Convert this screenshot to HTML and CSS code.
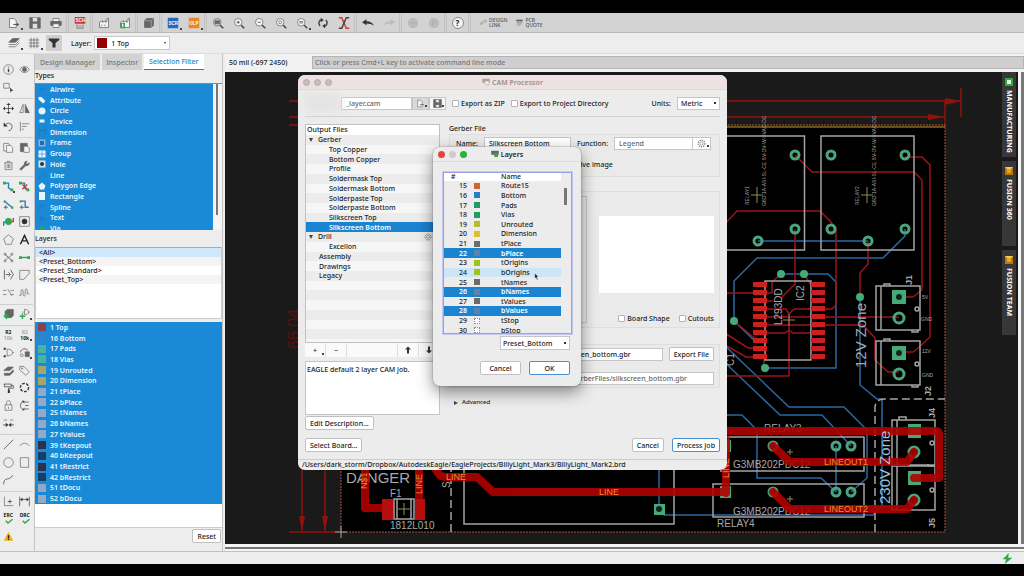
FILE: index.html
```html
<!DOCTYPE html>
<html lang="en">
<head>
<meta charset="utf-8">
<title>CAM Processor</title>
<link rel="stylesheet" href="styles.css">
</head>
<body>
<div class="screen">
  <header class="mainbar">
    <button class="tool menu" aria-label="Open"><svg viewBox="0 0 16 16"><path class="paper" d="M2 2h6l3 3v9H2z"/><path class="darkline" d="M7 10h7M12 8l2 2-2 2"/></svg></button>
    <button class="tool" aria-label="Save"><svg viewBox="0 0 16 16"><path class="solid" d="M1 1h14v14H1z"/><path class="pale" d="M5 1h6v5H5zM5 9h6v6H5z"/></svg></button>
    <button class="tool" aria-label="Print"><svg viewBox="0 0 16 16"><path class="paper" d="M4 2h8v4H4z"/><path class="solid" d="M1 6h14v5H1z"/><path class="paper" d="M4 9h8v5H4z"/></svg></button>
    <i class="sep"></i>
    <button class="tool" aria-label="Schematic"><svg viewBox="0 0 16 16"><path class="red" d="M1 0h14v9H1z"/><text x="2" y="7">SCH</text><path d="M4 10v5h8v-5M6 12h4"/></svg></button>
    <i class="sep"></i>
    <button class="tool" aria-label="Manufacturing"><svg viewBox="0 0 16 16"><path class="paper" d="M2 14V7l4-2v2l4-2v2l2-1V2h2v12zM4 11h2M8 11h2"/></svg></button>
    <button class="tool" aria-label="CAM"><svg viewBox="0 0 16 16"><path class="paper" d="M2 14V7l4-2v2l4-2v2l2-1V2h2v12z"/><path class="green" d="M2 8h6v7H2z"/><path class="white" d="M4 9h2v4H4z"/></svg></button>
    <i class="sep"></i>
    <button class="tool" aria-label="3D"><svg viewBox="0 0 16 16"><path class="solid" d="M2 5l3-3h9v9l-3 3H2z"/><path class="lightline" d="M2 5h9v9M11 5l3-3"/></svg></button>
    <i class="sep"></i>
    <button class="tool menu" aria-label="Script"><svg viewBox="0 0 16 16"><path class="blue" d="M1 1h14v14H1z"/><text x="2" y="10">SCR</text></svg></button>
    <button class="tool menu" aria-label="ULP"><svg viewBox="0 0 16 16"><path class="orange" d="M1 1h14v14H1z"/><text x="2" y="10">ULP</text></svg></button>
    <i class="sep"></i>
    <button class="tool" aria-label="Zoom to fit"><svg viewBox="0 0 16 16"><circle cx="7" cy="7" r="5"/><path class="solid" d="M4 5h6v4H4z"/><path class="thick" d="M11 11L15 15"/></svg></button>
    <button class="tool" aria-label="Zoom in"><svg viewBox="0 0 16 16"><circle class="paper" cx="7" cy="7" r="5"/><path class="darkline" d="M5 7h4M7 5v4"/><path class="thick" d="M11 11L15 15"/></svg></button>
    <button class="tool" aria-label="Zoom out"><svg viewBox="0 0 16 16"><circle class="paper" cx="7" cy="7" r="5"/><path class="darkline" d="M5 7h4"/><path class="thick" d="M11 11L15 15"/></svg></button>
    <button class="tool" aria-label="Zoom select"><svg viewBox="0 0 16 16"><circle class="paper" cx="7" cy="7" r="5"/><circle cx="7" cy="7" r="2"/><path class="thick" d="M11 11L15 15"/></svg></button>
    <button class="tool menu" aria-label="Zoom area"><svg viewBox="0 0 16 16"><circle class="paper" cx="7" cy="7" r="5"/><path d="M5 6h4v2H5z"/><path class="thick" d="M11 11L15 15"/></svg></button>
    <button class="tool" aria-label="Refresh"><svg viewBox="0 0 16 16"><path class="thick" d="M4 12C1 8 3 4 6 4M12 4c3 4 1 8-2 8"/><path class="dark" d="M5 1l4 3-4 3zM11 9l-4 3 4 3z"/></svg></button>
    <button class="tool" aria-label="Cancel command"><svg viewBox="0 0 16 16"><path class="redline" d="M1 1h4l6 14h4"/><path class="thick" d="M15 1h-4L5 15H1"/></svg></button>
    <i class="sep"></i>
    <button class="tool" aria-label="Undo"><svg viewBox="0 0 16 16"><path class="dark" d="M0 7l6-4v2.500c5 0 8 2 10 6-3-2-6-3-10-3V11z"/></svg></button>
    <button class="tool" aria-label="Redo"><svg viewBox="0 0 16 16"><path class="faint" d="M16 7l-6-4v2.500c-5 0-8 2-10 6 3-2 6-3 10-3V11z"/></svg></button>
    <i class="sep"></i>
    <button class="tool" aria-label="Stop"><svg viewBox="0 0 16 16"><circle class="faint" cx="8" cy="8" r="7"/><path class="lightline" d="M5 8h6"/></svg></button>
    <button class="tool" aria-label="Go"><svg viewBox="0 0 16 16"><circle class="faint" cx="8" cy="8" r="7"/><path class="lightline" d="M6 5l4 3-4 3z"/></svg></button>
    <i class="sep"></i>
    <button class="tool help" aria-label="Help"><span>?</span></button>
    <i class="sep"></i>
    <button class="wide"><svg viewBox="0 0 16 16"><path d="M7 9L4 12c-2 2-4-1-2-3l3-3M8 6l3-3c2-2 5 1 3 3l-3 3M5 10l5-5"/></svg><span>DESIGN<br>LINK</span></button>
    <button class="wide"><svg viewBox="0 0 16 16"><path class="solid" d="M1 2h14v3H1z"/><path d="M2 8h12M2 11h12M2 14h8"/></svg><span>PCB<br>QUOTE</span></button>
  </header>

  <div class="layerbar">
    <button class="tool menu" aria-label="Layer settings"><svg viewBox="0 0 16 16"><path class="solid" d="M1 7l5-5h9l-5 5z"/><path d="M1 10h9l5-5M1 13h9l5-5"/></svg></button>
    <button class="tool menu" aria-label="Grid"><svg viewBox="0 0 16 16"><path d="M4 1v14M8 1v14M12 1v14M1 4h14M1 8h14M1 12h14"/></svg></button>
    <button class="tool pressed" aria-label="Filter"><svg viewBox="0 0 16 16"><path class="dark" d="M1 2h14v2l-5 4v6H6V8L1 4z"/></svg></button>
    <label class="layer-label" for="layer">Layer:</label>
    <div class="layer-pick"><i class="swatch c-top"></i><select id="layer"><option>1 Top</option></select></div>
  </div>

  <main class="work">
    <nav class="palette" aria-label="Tools">
      <button aria-label="Info"><svg viewBox="0 0 16 16"><circle cx="8" cy="8" r="7"/><path class="thick" d="M8 7v5M8 4v1"/></svg></button>
      <button aria-label="Show"><svg viewBox="0 0 16 16"><path d="M1 8c4-6 10-6 14 0-4 6-10 6-14 0z"/><circle class="solid" cx="8" cy="8" r="3"/></svg></button>
      <button aria-label="Select"><svg viewBox="0 0 16 16"><path d="M1 2h8v7H1z"/><path class="dark" d="M10 8l5 5h-3l-1 3z"/></svg></button>
      <span></span>
      <hr>
      <button aria-label="Move"><svg viewBox="0 0 16 16"><path class="darkline" d="M8 2v12M2 8h12"/><path class="dark" d="M8 0l3 3H5zM8 16l3-3H5zM0 8l3-3v6zM16 8l-3-3v6z"/></svg></button>
      <button aria-label="Mirror"><svg viewBox="0 0 16 16"><path d="M6 2v12H1z"/><path class="solid" d="M9 2v12h6z"/></svg></button>
      <button aria-label="Rotate"><svg viewBox="0 0 16 16"><path class="darkline" d="M4 5c5-5 12 1 8 7-1 1-2 2-4 2"/><path class="dark" d="M1 2v6h6z"/></svg></button>
      <button aria-label="Align"><svg viewBox="0 0 16 16"><path d="M2 1v14M4 4h11M4 8h7M4 12h3"/></svg></button>
      <hr>
      <button aria-label="Copy"><svg viewBox="0 0 16 16"><path class="paper" d="M1 2h7l2 3v8H1z"/><path class="paper" d="M5 5h6l3 3v7H5z"/></svg></button>
      <button aria-label="Paste"><svg viewBox="0 0 16 16"><path class="solid" d="M2 2h10v12H2z"/><path class="paper" d="M7 6h5l3 3v6H7z"/></svg></button>
      <button aria-label="Delete"><svg viewBox="0 0 16 16"><path d="M2 4h12M6 4V2h4v2M3 4v10h10V4M6 6v6M8 6v6M10 6v6"/></svg></button>
      <button aria-label="Change"><svg viewBox="0 0 16 16"><path class="solid" d="M1 13l7-7c-1-3 2-5 4-4l-2 2 2 2 3-2c0 4-3 5-5 4l-7 7z"/></svg></button>
      <hr>
      <button class="menu" aria-label="Route"><svg viewBox="0 0 16 16"><path class="blueline" d="M2 3h6v7l4 3"/><path class="green" d="M0 1h4v4H0zM11 11h4v4h-4z"/></svg></button>
      <button aria-label="Ripup"><svg viewBox="0 0 16 16"><path class="blueline" d="M2 3h6v7l4 3"/><path class="redline" d="M5 5l7 7M12 5l-7 7"/><path class="green" d="M0 1h4v4H0zM11 11h4v4h-4z"/></svg></button>
      <button aria-label="Split"><svg viewBox="0 0 16 16"><path class="blueline" d="M2 3l12 10"/><path class="darkline" d="M1 12h6M4 9v6"/><path class="green" d="M1 2h3v3H1zM12 11h3v3h-3z"/></svg></button>
      <button aria-label="Slice"><svg viewBox="0 0 16 16"><path class="blueline" d="M3 3h6v9h5"/><path class="green" d="M1 2h3v3H1z"/><path class="darkline" d="M1 12h6M4 9v6"/></svg></button>
      <button aria-label="Via"><svg viewBox="0 0 16 16"><path class="blueline" d="M1 14V9h7"/><path class="redline" d="M8 8h7V3"/><circle class="green" cx="8" cy="8" r="5"/></svg></button>
      <button aria-label="Pad"><svg viewBox="0 0 16 16"><path d="M1 1h14v14H1z"/><circle class="dark" cx="8" cy="8" r="4"/></svg></button>
      <button aria-label="Polygon"><svg viewBox="0 0 16 16"><path d="M8 1l7 6-3 8H4L1 7z"/></svg></button>
      <button aria-label="Text"><svg viewBox="0 0 16 16"><path class="bold" d="M2 15L8 2l6 13M5 10h6"/></svg></button>
      <button aria-label="Ratsnest"><svg viewBox="0 0 16 16"><path d="M3 3c3 6 7 6 10 0M3 13c3-6 7-6 10 0M3 3l10 10"/><circle cx="3" cy="3" r="1.500"/><circle cx="13" cy="3" r="1.500"/><circle cx="3" cy="13" r="1.500"/><circle cx="13" cy="13" r="1.500"/></svg></button>
      <button aria-label="Airwire"><svg viewBox="0 0 16 16"><path class="greenline" d="M2 8h12"/><path class="green" d="M0 6h4v4H0zM12 6h4v4h-4z"/></svg></button>
      <button aria-label="Optimize"><svg viewBox="0 0 16 16"><path class="darkline" d="M2 1v14M4 8h6M8 5l3 3-3 3M11 1l4 7-4 7"/></svg></button>
      <button aria-label="Miter"><svg viewBox="0 0 16 16"><path d="M1 15V2h14v4L7 15z"/></svg></button>
      <button aria-label="Fanout"><svg viewBox="0 0 16 16"><path d="M0 5h5M0 11h5M7 3l6 10M11 5h5M11 11h5"/></svg></button>
      <button aria-label="Meander"><svg viewBox="0 0 16 16"><path d="M0 12h3V6c0-3 3-3 3 0v5c0 3 3 3 3 0V5c0-3 3-3 3 0v5h3"/></svg></button>
      <hr>
      <button aria-label="Add"><svg viewBox="0 0 16 16"><path class="solid" d="M3 5l3-3h9v9l-3 3H3z"/><path class="greenline" d="M1 12h8M5 8v8"/></svg></button>
      <button class="menu" aria-label="Add part"><svg viewBox="0 0 16 16"><path d="M5 6h3V2c4 0 6 2 6 4s-2 4-6 4V6M14 6h2"/><path class="greenline" d="M1 12h8M5 8v8"/></svg></button>
      <hr>
      <button class="words" aria-label="Name">R2<br><small>10k</small></button>
      <button class="words menu" aria-label="Value"><small>R2</small><br>10k</button>
      <button aria-label="Pinswap"><svg viewBox="0 0 16 16"><path d="M6 8V3c5 0 8 2 8 5s-3 5-8 5zM14 8h2"/><path class="dark" d="M1 1h3v3H1zM1 12h3v3H1z"/></svg></button>
      <button class="menu" aria-label="Replace"><svg viewBox="0 0 16 16"><path class="darkline" d="M2 8c1-6 8-7 11-3"/><path class="solid" d="M9 7h6v7H9z"/><circle cx="4" cy="12" r="2"/></svg></button>
      <button aria-label="Smash"><svg viewBox="0 0 16 16"><path class="solid" d="M1 8l6-5h8l-5 5zM2 12h8l5-5v3l-5 5H2z"/></svg></button>
      <button aria-label="Attribute"><svg viewBox="0 0 16 16"><path d="M1 7V2h6l8 8-5 5z"/><circle cx="4.500" cy="5" r="1"/></svg></button>
      <button aria-label="Paint"><svg viewBox="0 0 16 16"><path class="darkline" d="M1 3h11v4H2V3M12 5h3v4H8v3"/><path class="dark" d="M7 11h3v5H7z"/></svg></button>
      <button aria-label="Group"><svg viewBox="0 0 16 16"><circle class="dashed" cx="8" cy="8" r="6"/></svg></button>
      <button aria-label="Lock"><svg viewBox="0 0 16 16"><path d="M3 7h10v8H3zM5 7V4c0-4 6-4 6 0v3M8 10v3"/></svg></button>
      <button aria-label="Order"><svg viewBox="0 0 16 16"><path class="darkline" d="M6 3C1 3 1 12 5 13M9 3h5M9 8h5M9 13h5"/><path class="dark" d="M4 1h4v4zM4 15h4v-4z"/></svg></button>
      <button aria-label="Join"><svg viewBox="0 0 16 16"><path d="M1 3h5M10 3h5"/><path class="darkline" d="M0 10h6M10 10h6"/><path class="dark" d="M4 7l4 3-4 3zM12 7l-4 3 4 3z"/></svg></button>
      <span></span>
      <hr>
      <button aria-label="Line"><svg viewBox="0 0 16 16"><path class="darkline" d="M1 15L15 1"/></svg></button>
      <button aria-label="Arc"><svg viewBox="0 0 16 16"><path d="M1 10c4-5 10-5 14 0"/></svg></button>
      <button aria-label="Circle"><svg viewBox="0 0 16 16"><circle cx="8" cy="8" r="7"/></svg></button>
      <button aria-label="Rectangle"><svg viewBox="0 0 16 16"><path d="M2 1h12v14H2z"/></svg></button>
      <button aria-label="Spline"><svg viewBox="0 0 16 16"><path class="darkline" d="M1 15c0-12 8-4 13-13"/></svg></button>
      <span></span>
      <hr>
      <button aria-label="Mark"><svg viewBox="0 0 16 16"><path d="M2 1v13h13"/><path class="darkline" d="M7 8h6M10 5v6"/></svg></button>
      <button aria-label="Dimension"><svg viewBox="0 0 16 16"><path class="darkline" d="M1 1v14M15 1v14M2 5h12"/><path class="dark" d="M2 5l3-3v6zM14 5l-3-3v6z"/></svg></button>
      <button class="words" aria-label="ERC">ERC<svg viewBox="0 0 16 8"><path class="greenline" d="M5 3l3 3 6-5"/></svg></button>
      <button class="words" aria-label="DRC">DRC<svg viewBox="0 0 16 8"><path class="greenline" d="M5 3l3 3 6-5"/></svg></button>
      <button aria-label="Errors"><svg viewBox="0 0 16 16"><path class="amber" d="M8 1l7 13H1z"/><path class="bold" d="M8 6v4M8 11v2"/></svg></button>
      <span></span>
    </nav>

    <section class="side">
      <div class="tabs" role="tablist">
        <button role="tab">Design Manager</button><button role="tab">Inspector</button><button role="tab" class="on" aria-selected="true">Selection Filter</button>
      </div>
      <h2>Types</h2>
      <div class="types">
        <ul class="bluelist">
          <li><svg viewBox="0 0 16 16"><path class="dim" d="M1 8h14"/></svg>Airwire</li>
          <li><svg viewBox="0 0 16 16"><path class="white" d="M1 7V2h6l8 8-5 5z"/></svg>Attribute</li>
          <li><svg viewBox="0 0 16 16"><circle class="white" cx="8" cy="8" r="7"/></svg>Circle</li>
          <li><svg viewBox="0 0 16 16"><path class="white" d="M3 5h10v6H3z"/></svg>Device</li>
          <li><svg viewBox="0 0 16 16"><path class="dim" d="M2 1v14M14 1v14M2 5h12"/></svg>Dimension</li>
          <li><svg viewBox="0 0 16 16"><path class="haze" d="M1 1h14v14H1z"/><path class="blue" d="M4 4h8v8H4z"/></svg>Frame</li>
          <li><svg viewBox="0 0 16 16"><path class="white" d="M1 1h14v14H1z"/><path class="dim" d="M8 2v12M2 8h12"/></svg>Group</li>
          <li><svg viewBox="0 0 16 16"><path class="pale" d="M1 1h14v14H1z"/><circle class="dark" cx="8" cy="8" r="4"/></svg>Hole</li>
          <li><svg viewBox="0 0 16 16"><path class="dim" d="M2 14L14 2"/></svg>Line</li>
          <li><svg viewBox="0 0 16 16"><path class="white" d="M8 1l7 6-3 8H4L1 7z"/></svg>Polygon Edge</li>
          <li><svg viewBox="0 0 16 16"><path class="white" d="M2 0h12v16H2z"/></svg>Rectangle</li>
          <li><svg viewBox="0 0 16 16"><path class="dim" d="M1 14c0-11 8-4 13-12"/></svg>Spline</li>
          <li><svg viewBox="0 0 16 16"><path class="dim" d="M3 14L8 2l5 12M5 10h6"/></svg>Text</li>
          <li><svg viewBox="0 0 16 16"><circle class="green" cx="8" cy="8" r="5"/></svg>Via</li>
        </ul>
        <i class="thumb"></i>
      </div>
      <h2>Layers</h2>
      <ul class="presets">
        <li class="on">&lt;All&gt;</li><li>&lt;Preset_Bottom&gt;</li><li>&lt;Preset_Standard&gt;</li><li>&lt;Preset_Top&gt;</li>
      </ul>
      <div class="layers">
        <ul class="bluelist">
          <li><i class="swatch k-top"></i>1 Top</li>
          <li><i class="swatch k-bottom"></i>16 Bottom</li>
          <li><i class="swatch k-pad"></i>17 Pads</li>
          <li><i class="swatch k-pad"></i>18 Vias</li>
          <li><i class="swatch k-gold"></i>19 Unrouted</li>
          <li><i class="swatch k-gold"></i>20 Dimension</li>
          <li><i class="swatch k-gray"></i>21 tPlace</li>
          <li><i class="swatch k-gray"></i>22 bPlace</li>
          <li><i class="swatch k-gray"></i>25 tNames</li>
          <li><i class="swatch k-gray"></i>26 bNames</li>
          <li><i class="swatch k-gray"></i>27 tValues</li>
          <li><i class="swatch k-tkeep"></i>39 tKeepout</li>
          <li><i class="swatch k-bkeep"></i>40 bKeepout</li>
          <li><i class="swatch k-tkeep"></i>41 tRestrict</li>
          <li><i class="swatch k-bkeep"></i>42 bRestrict</li>
          <li><i class="swatch k-gray"></i>51 tDocu</li>
          <li><i class="swatch k-gray"></i>52 bDocu</li>
        </ul>
      </div>
      <footer><button class="btn">Reset</button></footer>
    </section>

    <section class="editor">
      <div class="cmdline">
        <span>50 mil (-697 2450)</span>
        <input type="text" aria-label="Command line" placeholder="Click or press Cmd+L key to activate command line mode">
      </div>
      <div class="stage">
        <svg class="board" viewBox="225 72 777 472" preserveAspectRatio="xMinYMin slice">
          <rect fill="#000" x="341" y="127" width="604" height="405"/>
          <g class="dimline">
            <path d="M289 101H961M289 117H945M961 88v29M945 101v26M289 125h60M302 125v407M325 125v407M289 532h52"/>
            <path class="arrow" d="M945 98l16 3-16 4zM928 114l17 3-17 3zM299 516h6l-3 16zM322 516h6l-3 16z"/>
          </g>
          <text class="dimtext" transform="translate(299 349) rotate(-90)">66.04</text>
          <path class="gold" d="M341 127H945"/>
          <path class="edge" d="M341 125H945V532H341z"/>
          <path class="silk thin" d="M335 532h12M341 526v12"/>

          <g class="bluetrace">
            <path d="M758 241H868M905 229v7L883 258H757L734 281v40L755 341M781 274h47l8 8v86h-70M860 297v88l17 14h5v106l-9 10H664l-5-6V460"/>
            <path d="M720 341L789 407h55l23 23v48l-16 14M720 358L780 415h42l29 31M720 415h22l15 15v48h64l15 14M836 446v46"/>
          </g>
          <g class="redtrace">
            <path d="M795 155l17 17h102l8 8v110l-9 7h-14M905 157h17l8 8v172l-13 12-4 3h-14"/>
            <path d="M720 229l17-18h83l11 11 5 8v75l-4 4h-24M795 229v55l-13 13M868 241v23l-8 9v24M781 274l-9 8v11h-52M804 274l7 11"/>
            <path d="M760 317h139M760 325h103l12 13v22l13 12h11M760 309h26l3 5v62H720M789 314l5-5h22M789 330l4 3h23M789 330l-4 3h-24M734 321l24 20M720 330l28 18h10M720 342l26 15h18v11M753 301h20"/>
          </g>

          <g class="silk">
            <path d="M720 136h84.500v114H720M821 136h93v114h-93zM765 281h46v79h-46zM876 286h44v44h-44zM881 286v44M876 341h44v44h-44zM881 341v44"/>
            <path d="M884 286v-2h6v2M912 330v2h6v-2M884 341v-2h6v2M912 385v2h6v-2M899 420v-3h7v3M928 464v2h6"/>
            <path d="M720 437h144v34H720M713 484h151v33H713zM892 420h43v45h-43zM897 420v45M892 466h43v44h-43zM897 466v44M464 460h210v64H464z"/>
            <circle cx="917" cy="309" r="2"/><circle cx="917" cy="364" r="2"/><circle cx="932" cy="443" r="2"/><circle cx="932" cy="490" r="2"/>
          </g>
          <path class="zone" d="M451 440v92M875 532V407q1-8 9-8h61"/>

          <g class="pins">
            <path d="M760 281v80" /><path d="M818 281v80"/>
          </g>
          <path class="cross" d="M783 320h12M789 314v12M757 187v16M751 195h12M867 187v16M861 195h12M404 503v12M398 509h12M787 452h6M790 449v6M787 499h6M790 496v6"/>

          <g class="silktext">
            <text class="t14" transform="translate(866 368) rotate(-90)">12V Zone</text>
            <text class="t10" transform="translate(782 325) rotate(-90)">L293DD</text>
            <text class="t10" transform="translate(804 301) rotate(-90)">IC2</text>
            <text class="t9" transform="translate(912 285) rotate(-90)">J1</text>
            <text class="t9" transform="translate(931 396) rotate(-90)">J2</text>
            <text class="t9" transform="translate(935 418) rotate(-90)">J4</text>
            <text class="t9" transform="translate(935 528) rotate(-90)">J5</text>
            <text class="t5" transform="translate(766 206) rotate(-90)">G6D-1A-ASI-SL-CE SV-DV-W-SVAC-DC</text>
            <text class="t5" transform="translate(876 206) rotate(-90)">G6D-1A-ASI-SL-CE SV-DV-W-SVAC-DC</text>
            <text class="t5" transform="translate(749 205) rotate(-90)">RELAY1</text>
            <text class="t5" transform="translate(859 205) rotate(-90)">RELAY2</text>
            <text class="t5" x="922" y="299">5V</text><text class="t5" x="921" y="321">GND</text>
            <text class="t5" x="922" y="353">12V</text><text class="t5" x="922" y="377">GND</text>
            <text class="t10" x="764" y="432">RELAY3</text>
            <text class="t10" x="717" y="527">RELAY4</text>
            <text class="t10" x="733" y="468">G3MB202PDC12</text>
            <text class="t10" x="733" y="515">G3MB202PDC12</text>
            <text class="t14" x="346" y="483">DANGER</text>
            <text class="t10" x="390" y="497">F1</text>
            <text class="t10" x="390" y="529">1812L010</text>
            <text class="t10" transform="translate(450 488) rotate(-90)">S</text>
            <text class="t10" transform="translate(734 366) rotate(-90)">C1</text>
          </g>

          <g class="pads">
            <circle cx="795" cy="155" r="4"/><circle cx="831" cy="155" r="4"/><circle cx="905" cy="155" r="4"/>
            <circle cx="795" cy="229" r="4"/><circle cx="831" cy="229" r="4"/><circle cx="905" cy="229" r="4"/>
            <circle cx="758" cy="241" r="4"/><circle cx="868" cy="241" r="4"/>
            <circle cx="899" cy="318" r="5"/><circle cx="899" cy="374" r="5"/>
            <circle cx="914" cy="452" r="5"/><circle cx="914" cy="500" r="5"/>
            <circle cx="773" cy="446" r="4"/><circle cx="836" cy="446" r="4"/><circle cx="851" cy="446" r="4"/>
            <circle cx="773" cy="492" r="4"/><circle cx="836" cy="492" r="4"/><circle cx="851" cy="492" r="4"/>
          </g>
          <path class="padfill" d="M892 290h14v14h-14zM892 346h14v14h-14zM908 424h13v14h-13zM908 471h13v14h-13zM654 504h11v11h-11zM722 440h9v12h-9zM720 486h11v12h-11z"/>
          <g class="vias"><circle cx="781" cy="274" r="4"/><circle cx="804" cy="274" r="4"/><circle cx="860" cy="297" r="4"/><circle cx="734" cy="321" r="4"/><circle cx="765" cy="368" r="4"/></g>
          <g class="holes"><circle cx="899" cy="297" r="3"/><circle cx="899" cy="353" r="3"/><circle cx="659" cy="509" r="3"/></g>

          <g class="power">
            <path d="M720 431h216q3 0 3 4v43h-25M773 446l17 16h117l7-10M773 492l17 17h117l7-9M726 440v53M430 460l8 13q2 4 8 4h31l16 15h233M365 460v48h20M419 460v50"/>
            <path class="fuse" d="M382 499h11v21h-11zM415 499h10v21h-10z"/>
          </g>
          <path class="silk" d="M394 499h20v20h-20zM397 499v20M411 499v20"/>
          <text class="zonetext" transform="translate(890 504) rotate(-90)">230V Zone</text>
          <g class="nettext">
            <text x="824" y="465">LINEOUT1</text><text x="824" y="512">LINEOUT2</text>
            <text x="446" y="480">LINE</text><text x="599" y="495">LINE</text>
            <text transform="translate(422 494) rotate(-90)">LINE</text>
            <text transform="translate(367 489) rotate(-90)">N$1</text>
            <text transform="translate(729 478) rotate(-90)">LINE</text>
          </g>
        </svg>

        <aside class="edge-tabs">
          <button><i class="logo fabgreen"></i>MANUFACTURING</button>
          <button><i class="logo"></i>FUSION 360</button>
          <button><i class="logo"></i>FUSION TEAM</button>
        </aside>
        <i class="vscroll"></i>

        <section class="window cam" aria-label="CAM Processor">
          <header class="titlebar muted">
            <span class="lights"><i></i><i></i><i></i></span>
            <h1><svg viewBox="0 0 16 16"><path class="solid" d="M1 2h14v7H1z"/><path class="paper" d="M5 6h9v8H7z"/></svg>CAM Processor</h1>
          </header>
          <div class="jobbar">
            <i class="smudge"></i>
            <div class="filebox"><input type="text" aria-label="Job file" value="_layer.cam"><button class="menu" aria-label="Load job"><svg viewBox="0 0 16 16"><path class="paper" d="M3 2h5l3 3v9H3z"/><path class="darkline" d="M7 10h7"/></svg></button><button class="menu" aria-label="Save job"><svg viewBox="0 0 16 16"><path class="solid" d="M1 1h14v14H1z"/><path class="paper" d="M5 1h6v5H5zM5 10h6v5H5z"/></svg></button></div>
            <label><input type="checkbox">Export as ZIP</label>
            <label><input type="checkbox">Export to Project Directory</label>
            <label class="units" for="units">Units:</label>
            <select id="units"><option>Metric</option></select>
          </div>
          <div class="cambody">
            <div class="outputs">
              <div class="treebox">
                <h3>Output Files</h3>
                <ul class="tree">
                  <li class="l0">Gerber</li><li class="l2">Top Copper</li><li class="l2">Bottom Copper</li><li class="l2">Profile</li><li class="l2">Soldermask Top</li><li class="l2">Soldermask Bottom</li><li class="l2">Solderpaste Top</li><li class="l2">Solderpaste Bottom</li><li class="l2">Silkscreen Top</li><li class="l2 on">Silkscreen Bottom</li>
                  <li class="l0">Drill<svg class="gear" viewBox="0 0 16 16"><circle cx="8" cy="8" r="3"/><circle class="teeth" cx="8" cy="8" r="6"/></svg></li><li class="l2">Excellon</li><li class="l1">Assembly</li><li class="l1">Drawings</li><li class="l1">Legacy</li>
                  <li></li><li></li><li></li><li></li><li></li><li></li>
                </ul>
              </div>
              <div class="treetools"><button class="menu">+</button><button>−</button><span></span><button aria-label="Move up"><svg viewBox="0 0 16 16"><path class="dark" d="M8 1l6 6h-4v8H6V7H2z"/></svg></button><button aria-label="Move down"><svg viewBox="0 0 16 16"><path class="dark" d="M8 15l6-6h-4V1H6v8H2z"/></svg></button></div>
              <textarea aria-label="Description" readonly>EAGLE default 2 layer CAM job.</textarea>
              <button class="btn">Edit Description...</button>
            </div>
            <div class="settings">
              <h3>Gerber File</h3>
              <div class="group g1">
                <div class="row"><label for="nm">Name:</label><input id="nm" type="text" value="Silkscreen Bottom"><label for="fn">Function:</label><div class="combo"><input id="fn" type="text" value="Legend"><button class="menu" aria-label="Function options"><svg viewBox="0 0 16 16"><circle cx="8" cy="8" r="3"/><circle class="teeth" cx="8" cy="8" r="6"/></svg></button></div></div>
                <label class="negative"><input type="checkbox">Negative image</label>
              </div>
              <div class="group g2">
                <div class="used"></div>
                <div class="previewcol"><div class="preview"></div>
                  <div class="checks"><label><input type="checkbox">Board Shape</label><label><input type="checkbox">Cutouts</label></div></div>
              </div>
              <div class="group g3">
                <div class="row"><input class="right" type="text" aria-label="File name" value="silkscreen_bottom.gbr"><button class="btn">Export File</button></div>
                <input class="path" type="text" aria-label="File path" value="GerberFiles/silkscreen_bottom.gbr">
              </div>
              <button class="advanced"><i></i>Advanced</button>
            </div>
          </div>
          <div class="actions"><button class="btn">Select Board...</button><span></span><button class="btn">Cancel</button><button class="btn default">Process Job</button></div>
          <footer>/Users/dark_storm/Dropbox/AutodeskEagle/EagleProjects/BillyLight_Mark3/BillyLight_Mark2.brd</footer>
        </section>

        <section class="window pick" aria-label="Layers">
          <header class="titlebar">
            <span class="lights live"><i></i><i></i><i></i></span>
            <h1><svg viewBox="0 0 16 16"><path class="solid" d="M1 2h14v7H1z"/><path class="green" d="M5 6h9v8H7z"/></svg>Layers</h1>
          </header>
          <div class="tablebox">
            <table>
              <thead><tr><th>#</th><th></th><th>Name</th></tr></thead>
              <tbody>
                <tr><td>15</td><td><i class="swatch l15"></i></td><td>Route15</td></tr>
                <tr><td>16</td><td><i class="swatch l16"></i></td><td>Bottom</td></tr>
                <tr><td>17</td><td><i class="swatch l17"></i></td><td>Pads</td></tr>
                <tr><td>18</td><td><i class="swatch l17"></i></td><td>Vias</td></tr>
                <tr><td>19</td><td><i class="swatch l19"></i></td><td>Unrouted</td></tr>
                <tr><td>20</td><td><i class="swatch l20"></i></td><td>Dimension</td></tr>
                <tr><td>21</td><td><i class="swatch l21"></i></td><td>tPlace</td></tr>
                <tr class="on"><td>22</td><td><i class="swatch l22"></i></td><td>bPlace</td></tr>
                <tr><td>23</td><td><i class="swatch l23"></i></td><td>tOrigins</td></tr>
                <tr class="hover"><td>24</td><td><i class="swatch l23"></i></td><td>bOrigins</td></tr>
                <tr><td>25</td><td><i class="swatch l21"></i></td><td>tNames</td></tr>
                <tr class="on"><td>26</td><td><i class="swatch l22"></i></td><td>bNames</td></tr>
                <tr><td>27</td><td><i class="swatch l21"></i></td><td>tValues</td></tr>
                <tr class="on"><td>28</td><td><i class="swatch l22"></i></td><td>bValues</td></tr>
                <tr><td>29</td><td><i class="swatch l29"></i></td><td>tStop</td></tr>
                <tr><td>30</td><td><i class="swatch l30"></i></td><td>bStop</td></tr>
              </tbody>
            </table>
            <i class="thumb"></i>
            <svg class="cursor" viewBox="0 0 10 14"><path d="M1 1v10l2-2 2 4 2-1-2-4h3z"/></svg>
          </div>
          <select aria-label="Preset"><option>Preset_Bottom</option></select>
          <div class="pickactions"><button class="btn">Cancel</button><button class="btn default">OK</button></div>
        </section>
      </div>
      <i class="hscroll"></i>
    </section>
  </main>
  <footer class="status"><svg viewBox="0 0 16 16"><path class="green" d="M10 0L1 9h5l-2 7 11-9H9z"/></svg></footer>
</div>
</body>
</html>
```
FILE: styles.css
```css
* { box-sizing: border-box; }
html, body { margin: 0; height: 100%; }
body { background: #000; color: #222; font: 500 7px/9px "Noto Sans", "Open Sans", sans-serif; }
button, input, select, textarea { font: inherit; color: inherit; margin: 0; padding: 0; border: 0; background: none; border-radius: 0; outline: 0; min-width: 0; }
select { appearance: none; }
h1, h2, h3, ul { margin: 0; padding: 0; font: inherit; list-style: none; }
svg { display: block; fill: none; stroke: #666; stroke-width: 1; }

/* icon parts */
.solid { fill: #666; }
.dark { fill: #333; stroke: none; }
.darkline { stroke: #333; }
.paper { fill: #f4f4f4; }
.pale { fill: #d8e0e8; stroke: none; }
.haze { fill: #86b4dc; stroke: none; }
.white { fill: #e8f4ff; stroke: none; }
.red { fill: #d3343a; stroke: none; }
.blue { fill: #2768b8; stroke: none; }
.orange { fill: #e8862b; stroke: none; }
.green { fill: #2fa84c; stroke: none; }
.amber { fill: #f2b01e; stroke: none; }
.faint { fill: #bcbcbc; stroke: none; }
.dim { stroke: #1768a8; }
.thick { stroke-width: 2; stroke: #444; }
.bold { stroke-width: 2; stroke: #222; }
.lightline { stroke: #aaa; }
.redline { stroke: #d8392f; stroke-width: 2; }
.blueline { stroke: #2d7cb8; stroke-width: 2; }
.greenline { stroke: #2fa84c; stroke-width: 2; }
.dashed { stroke: #333; stroke-width: 2; stroke-dasharray: 4 2; }
.teeth { stroke-width: 2; stroke-dasharray: 2 2; }

.screen { height: 100vh; padding: 13px 0 12px; display: flex; flex-direction: column; }

.mainbar, .layerbar { display: flex; align-items: center; flex: none; }
.mainbar { height: 20px; padding-left: 3px; background: #d3d3d3; border-bottom: 1px solid #b8b8b8; }
.tool { width: 21px; height: 18px; display: grid; place-items: center; position: relative; flex: none; }
.tool svg { width: 12px; height: 12px; }
.tool text { fill: #fff; stroke: none; font: 700 6px "Liberation Sans", sans-serif; }
.menu { position: relative; }
.menu::after { content: ""; position: absolute; right: 1px; bottom: 2px; width: 2px; height: 2px; background: #444; }
.sep { width: 3px; height: 20px; flex: none; border-left: 1px solid #c2c2c2; border-right: 1px solid #c2c2c2; }
.help span { width: 12px; height: 12px; border: 1px solid #888; border-radius: 50%; background: #f4f4f4; font-weight: 700; font-size: 8px; line-height: 10px; }
.wide { display: flex; align-items: center; gap: 2px; margin-left: 9px; font-size: 5px; line-height: 5px; text-align: left; color: #555; }
.wide svg { width: 7px; height: 7px; }

.layerbar { height: 21px; padding-left: 4px; background: #ededed; border-bottom: 1px solid #dcdcdc; }
.layerbar .tool { width: 20px; }
.layerbar .tool.pressed { background: #cfcfcf; width: 16px; height: 16px; margin-left: 2px; }
.layer-label { margin: 0 3px 0 9px; }
.layer-pick { display: flex; align-items: center; gap: 4px; width: 76px; height: 14px; padding: 0 2px; background: #fff; border: 1px solid #c8c8c8; position: relative; }
.layer-pick::after { content: ""; position: absolute; right: 3px; top: 5px; border: 1px solid transparent; border-top: 2px solid #333; border-bottom: 0; }
.layer-pick select { flex: 1; }
.swatch { display: block; width: 8px; height: 8px; flex: none; }
.layer-pick .swatch { width: 10px; height: 10px; }
.c-top { background: #980000; }

.work { flex: 1; min-height: 0; display: flex; background: #ededed; }

.palette { width: 35px; flex: none; display: grid; grid-template-columns: 1fr 1fr; align-content: space-between; justify-items: center; padding: 7px 1px 6px 0; border-right: 1px solid #c4c4c4; }
.palette button { width: 16px; height: 17px; display: grid; place-items: center; }
.palette svg { width: 11px; height: 11px; }
.palette span { height: 17px; }
.palette hr { grid-column: 1 / 3; width: 100%; height: 3px; margin: 0; border: 0; border-bottom: 1px solid #d0d0d0; }
.palette .words { display: block; font-size: 5px; line-height: 6px; font-weight: 700; }
.palette .words small { font-size: 5px; color: #aaa; }
.palette .words svg { width: 12px; height: 7px; margin: 0 auto; }

.side { width: 188px; flex: none; display: flex; flex-direction: column; border-right: 1px solid #c4c4c4; }
.tabs { display: flex; gap: 2px; height: 16px; }
.tabs button { background: #d2d2d2; color: #777; padding: 0 5px; }
.tabs button:nth-child(2) { padding: 0 4px; }
.tabs .on { background: #fff; color: #1b7fc8; border-bottom: 1px solid #1b7fc8; padding: 0 5px; }
.side h2 { height: 13px; line-height: 11px; }
.types { display: flex; height: 147px; overflow: hidden; background: #f4f4f4; border-top: 1px solid #888; }
.types .bluelist { flex: 1; height: 150px; }
.types .thumb { width: 2px; height: 131px; margin: 0 4px 0 3px; background: #777; }
.bluelist { background: #1b8ad6; color: #eaf6ff; font-weight: 600; display: grid; grid-auto-rows: 1fr; }
.bluelist li { display: flex; align-items: center; gap: 4px; padding-left: 3px; min-height: 0; }
.bluelist svg { width: 8px; height: 8px; }
.types + h2 { padding-top: 3px; height: 17px; }
.presets { height: 72px; background: #fff; border: 1px solid #ccc; border-top-color: #aaa; }
.presets li { padding-left: 3px; }
.presets li:nth-child(even) { background: #f4f4f4; }
.presets li.on { background: #cfe8fb; }
.layers { flex: 1; min-height: 0; margin-top: 3px; background: #fff; border-bottom: 1px solid #ccc; }
.layers .bluelist { height: 182px; }
.k-top { background: #8c4050; } .k-bottom { background: #2b86cc; } .k-pad { background: #45b59c; } .k-gold { background: #a8a468; } .k-gray { background: #93a7c6; } .k-tkeep { background: #30304a; } .k-bkeep { background: #173f63; }
.side footer { display: flex; justify-content: flex-end; padding: 1px 1px 0; height: 23px; }
.btn { height: 14px; padding: 0 4px; background: #fff; border: 1px solid #c0c0c0; border-radius: 2px; white-space: nowrap; }
.default { border-color: #4a90d0; }

.editor { flex: 1; min-width: 0; display: flex; flex-direction: column; margin-left: 2px; }
.cmdline { display: flex; align-items: center; height: 18px; padding: 0 0 2px 4px; background: #f2f2f2; flex: none; }
.cmdline span { width: 83px; }
.cmdline input { flex: 1; height: 13px; padding-left: 2px; background: #cfcfcf; border: 1px solid #b4b4b4; }
.cmdline input::placeholder { color: #777; opacity: 1; }
.stage { flex: 1; min-height: 0; display: flex; position: relative; background: #1a1a1a; }
.board { flex: 1; min-width: 0; height: 100%; background: #1a1a1a; stroke: none; }
.edge-tabs { width: 16px; display: flex; flex-direction: column; gap: 4px; flex: none; }
.edge-tabs button { writing-mode: vertical-rl; width: 14px; height: 85px; padding-top: 6px; background: #373737; color: #fff; font-weight: 700; display: flex; align-items: center; gap: 4px; }
.logo { width: 8px; height: 8px; background: #eaa31c; border: 2px solid #b87808; border-top-color: #f4c860; }
.fabgreen { background: #d8ffd8; border-color: #34a834; }
.vscroll { width: 6px; flex: none; background: #777; border-left: 3px solid #f4f4f4; }
.hscroll { height: 7px; flex: none; background: #777; border: solid #f4f4f4; border-width: 3px 0 2px; }
.status { height: 13px; flex: none; display: flex; justify-content: flex-end; align-items: center; padding-right: 11px; background: #ededed; border-top: 1px solid #c0c0c0; }
.status svg { width: 11px; height: 11px; }

/* board artwork */
.dimline path { stroke: #8e130c; stroke-width: 1.500; }
.dimline .arrow { fill: #8e130c; stroke: none; }
.dimtext { fill: #5c100c; font: 16px "Liberation Sans", sans-serif; }
.gold { stroke: #8a6410; stroke-width: 1.500; }
.edge { stroke: #a85040; stroke-dasharray: 2 1; }
.silk { stroke: #a4a4a4; stroke-width: 1.500; }
.thin { stroke-width: 1; }
.zone { stroke: #a4a4a4; stroke-width: 1.500; stroke-dasharray: 8 4; }
.bluetrace { stroke: #2a68a0; stroke-width: 1.500; }
.redtrace { stroke: #9c1318; stroke-width: 1.500; }
.pins { stroke: #cc2020; stroke-width: 14; stroke-dasharray: 5 3; stroke-dashoffset: -1; }
.cross { stroke: #8c8c50; }
.pads { stroke: #49a57c; stroke-width: 3; }
.padfill, .vias { fill: #46aa78; stroke: none; }
.holes { fill: #10281c; stroke: none; }
.power { stroke: #b00000; stroke-width: 8; stroke-linecap: round; stroke-linejoin: round; opacity: .9; }
.power .fuse { fill: #c81010; stroke: none; }
.silktext { fill: #a8a8a8; stroke: none; font-family: "Liberation Sans", sans-serif; }
.zonetext { fill: #9cc0d8; stroke: none; font: 15px "Liberation Sans", sans-serif; }
.t14 { font-size: 15px; } .t10 { font-size: 10px; } .t9 { font-size: 9px; font-weight: 700; } .t5 { font-size: 5px; }
.nettext { fill: #e89030; stroke: none; font: 9px "Liberation Sans", sans-serif; }

/* floating windows */
.window { position: absolute; display: flex; flex-direction: column; background: #ececec; border-radius: 7px; overflow: hidden; }
.titlebar { display: flex; align-items: center; height: 15px; flex: none; padding: 0 5px; border-bottom: 1px solid #dadada; }
.titlebar h1 { flex: 1; display: flex; justify-content: center; align-items: center; gap: 2px; font-weight: 600; padding-right: 28px; }
.titlebar svg { width: 8px; height: 8px; }
.lights { display: flex; gap: 4px; width: 28px; }
.lights i { width: 7px; height: 7px; border-radius: 50%; background: #c9bdbd; border: 1px solid #b5a9a9; flex: none; }
.live i { border: 0; background: #cfcbcf; }
.live i:first-child { background: #e8443e; }
.live i:last-child { background: #28b43c; }
.muted { background: #eee1e1; color: #9a9090; }
.muted svg { opacity: .5; }
.window input[type="text"], .window select, .window textarea { background-color: #fff; border: 1px solid #c6c6c6; height: 13px; padding-left: 4px; }
.window .jobbar select, .window .pick select { padding-left: 3px; }
.window select { background-image: linear-gradient(#333, #333); background-size: 2px 2px; background-repeat: no-repeat; background-position: right 3px center; }
.window label { display: flex; align-items: center; gap: 2px; white-space: nowrap; }
input[type="checkbox"] { appearance: none; width: 7px; height: 7px; background: #fff; border: 1px solid #b4b4b4; border-radius: 1px; }

.cam { left: 73px; top: 3px; width: 429px; }
.jobbar { display: flex; align-items: center; height: 27px; margin: 0 7px; border-bottom: 1px solid #d0d0d0; }
.smudge { width: 36px; height: 20px; background: #e4e4e4; filter: blur(4px); }
.filebox { display: flex; margin-right: 6px; }
.filebox input { width: 71px; color: #666; }
.filebox button { width: 17px; height: 13px; border: 1px solid #c6c6c6; display: grid; place-items: center; background: #f6f6f6; }
.filebox button:first-of-type { background: #d8d8d8; }
.filebox svg { width: 9px; height: 9px; }
.jobbar label { margin-right: 6px; }
.jobbar .units { margin-left: auto; margin-right: 6px; }
#units { width: 43px; }
.cambody { display: flex; gap: 9px; padding: 7px 7px 0; }
.outputs { width: 135px; flex: none; display: flex; flex-direction: column; align-items: stretch; }
.treebox { border: 1px solid #c0c0c0; background: #f6f6f6; padding-bottom: 3px; }
.treebox h3 { padding-left: 1px; height: 10px; line-height: 10px; background: #fff; }
.tree { height: 204px; display: grid; grid-auto-rows: 1fr; }
.tree li { display: flex; align-items: center; min-height: 0; }
.tree li:nth-child(odd) { background: #ececec; }
.tree .l0::before { content: ""; border: 2px solid transparent; border-top: 4px solid #444; border-bottom: 0; margin: 0 5px 0 3px; }
.tree .l1 { padding-left: 13px; }
.tree .l2 { padding-left: 23px; }
.tree li.on { background: #1b84d0; color: #fff; font-weight: 600; }
.gear { width: 8px; height: 8px; margin: 0 7px 0 auto; }
.treetools { display: flex; height: 14px; background: #fafafa; }
.treetools button { width: 21px; display: grid; place-items: center; border-right: 1px solid #e0e0e0; }
.treetools span { flex: 1; border-right: 1px solid #e0e0e0; }
.treetools svg { width: 8px; height: 8px; }
.window textarea { margin: 4px 0 1px; height: 54px; padding: 3px 1px; resize: none; display: block; }
.outputs .btn { align-self: flex-start; }
.settings { flex: 1; min-width: 0; display: flex; flex-direction: column; }
.settings h3 { height: 10px; }
.group { border: 1px solid #dedede; background: #eaeaea; }
.row { display: flex; align-items: center; gap: 6px; }
.g1 { height: 43px; padding: 2px 8px 0 6px; }
.g1 #nm { width: 87px; flex: none; }
.combo { flex: 1; min-width: 0; display: flex; }
.combo input { flex: 1; width: 0; color: #666; }
.combo button { width: 18px; height: 13px; border: 1px solid #c6c6c6; border-left: 0; background: #fff; display: grid; place-items: center; }
.combo svg { width: 9px; height: 9px; }
.negative { padding-left: 95px; height: 29px; }
.g2 { margin-top: 14px; height: 137px; display: flex; padding: 4px 5px; gap: 12px; }
.used { flex: 1; border: 1px solid #c8c8c8; }
.previewcol { width: 115px; display: flex; flex-direction: column; justify-content: space-between; padding-top: 20px; }
.preview { height: 77px; background: #fff; }
.checks { display: flex; justify-content: flex-end; gap: 9px; }
.previewcol .checks { padding-bottom: 0; }
.g3 { margin-top: 16px; height: 44px; padding: 2px 5px; display: flex; flex-direction: column; justify-content: space-between; }
.g3 .row input { flex: 1; }
.window .g3 input { text-align: right; padding-right: 26px; }
.window .g3 .right { padding-right: 31px; }
.window .g3 .path { color: #666; }
.advanced { display: flex; align-items: center; gap: 4px; font-size: 6px; padding: 10px 5px 0; align-self: flex-start; }
.advanced i { border: 2px solid transparent; border-left: 4px solid #444; border-right: 0; }
.actions { display: flex; gap: 8px; padding: 8px 7px 7px; }
.actions span { flex: 1; }
.cam footer { height: 11px; line-height: 10px; padding-left: 4px; border-top: 1px solid #ccc; }

.pick { left: 208px; top: 75px; width: 148px; padding-bottom: 11px; box-shadow: 0 6px 16px rgba(0, 0, 0, .45), 0 0 2px rgba(0, 0, 0, .4); }
.tablebox { position: relative; height: 162px; margin: 10px 9px 2px 10px; border: 1px solid #9a9fe6; outline: 1px solid #c4c8f4; display: flex; overflow: hidden; padding: 0 3px 0 0; }
.tablebox table { flex: 1; display: block; }
.tablebox thead { display: block; height: 8px; background: #fff; }
.tablebox tbody { display: grid; grid-auto-rows: 1fr; height: 154px; }
.tablebox tr { display: grid; grid-template-columns: 23px 34px 1fr; align-items: center; min-height: 0; }
.tablebox td, .tablebox th { padding: 0; font-weight: inherit; text-align: left; }
.tablebox th { padding-left: 7px; line-height: 8px; }
.tablebox th:last-child { padding-left: 0; }
.tablebox td:first-child { text-align: right; }
.tablebox td:nth-child(2) { padding-left: 7px; }
.tablebox .swatch { width: 6px; height: 6px; }
.tablebox .on { background: #1b84d0; color: #fff; font-weight: 600; }
.tablebox .hover { background: #cce6f8; }
.tablebox .thumb { width: 3px; height: 17px; margin: 15px 1px 0 3px; background: #777; }
.cursor { position: absolute; left: 90px; top: 99px; width: 6px; height: 9px; }
.cursor path { fill: #222; stroke: #fff; }
.l15 { background: #d8602a; } .l16 { background: #2280c8; } .l17 { background: #1e9c62; } .l19 { background: #b8bc28; } .l20 { background: #dcc030; } .l21 { background: #6c6c6c; } .l22 { background: #5d84a8; } .l23 { background: #9cc418; }
.l29, .l30 { background: #fff; border: 1px dotted #888; }
.window.pick select { width: 70px; align-self: flex-end; margin-right: 11px; height: 14px; padding-left: 2px; }
.pickactions { display: flex; justify-content: flex-end; gap: 8px; padding: 11px 11px 0; }
.pickactions .btn { width: 41px; }
```
